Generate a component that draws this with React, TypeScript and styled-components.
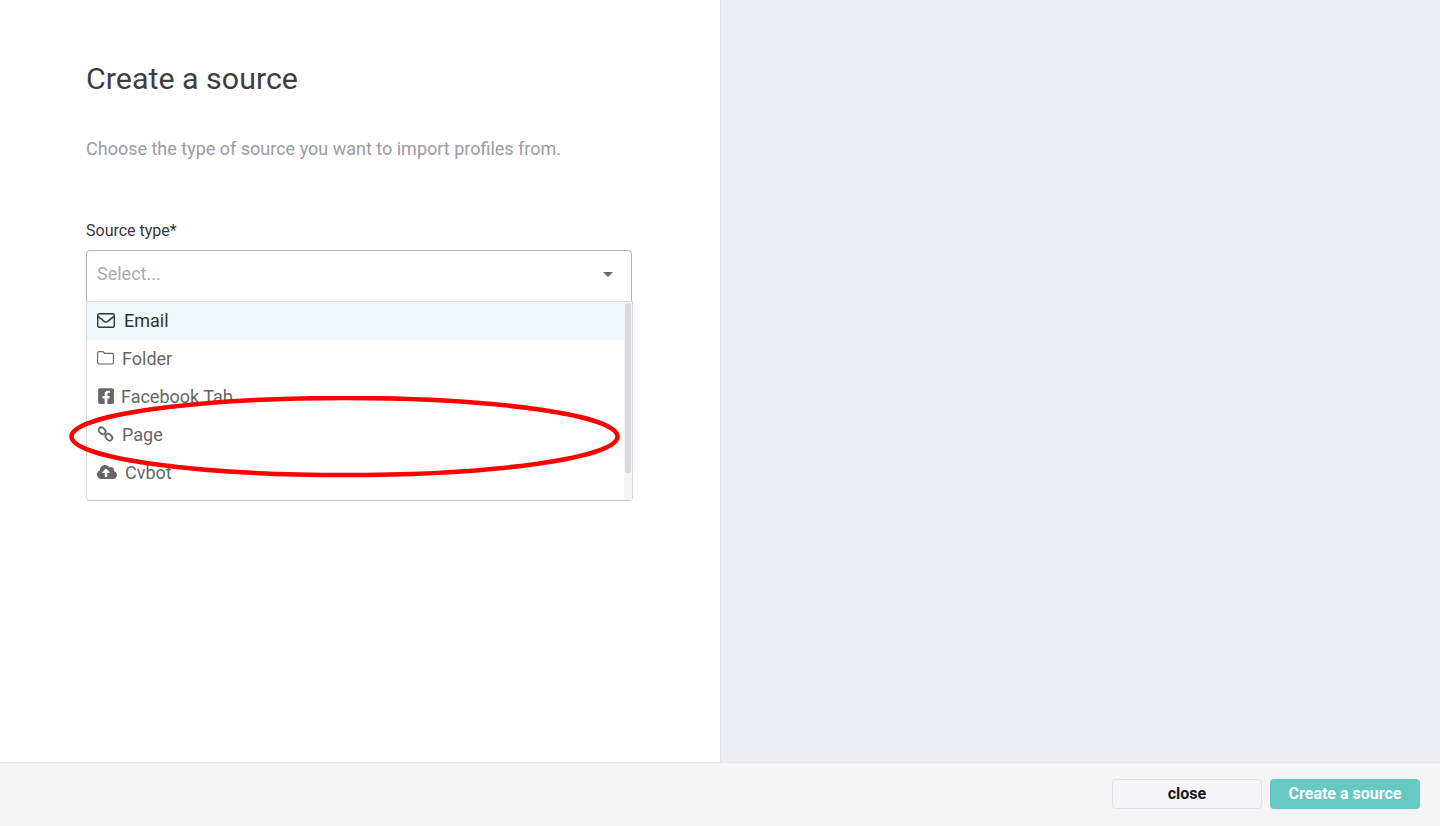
import React from 'react';
import { FaCloudUploadAlt, FaFacebookSquare } from 'react-icons/fa';
import styled, { createGlobalStyle } from 'styled-components';

const GlobalStyle = createGlobalStyle`
  html, body {
    margin: 0;
    padding: 0;
    background: #fff;
    font-family: Roboto, "Liberation Sans", sans-serif;
  }
`;

const MailIcon = () => (
  <svg viewBox="0 0 18 15" fill="none" stroke="currentColor" strokeWidth="1.4" strokeLinejoin="round" style={{ height: 15 }}>
    <rect x="0.7" y="0.7" width="16.6" height="13.6" rx="1.6" />
    <path d="M1 3.4l6.6 5.2c.9.6 1.9.6 2.8 0L17 3.4" />
  </svg>
);

const FolderIcon = () => (
  <svg viewBox="0 0 17 14" fill="none" stroke="currentColor" strokeWidth="1.1" strokeLinejoin="round" style={{ height: 14 }}>
    <path d="M2 .6h3.4c.7 0 1.1.3 1.4.8l.6 1h7.6c.8 0 1.4.6 1.4 1.4v7.8c0 .8-.6 1.4-1.4 1.4H2c-.8 0-1.4-.6-1.4-1.4V2C.6 1.2 1.2.6 2 .6z" />
  </svg>
);

const ChainIcon = () => (
  <svg viewBox="0 0 16 16" fill="none" stroke="currentColor" strokeWidth="1.8" style={{ height: 16 }}>
    <rect x="0.9" y="2.1" width="7.4" height="5.4" rx="2.7" transform="rotate(42 4.6 4.8)" />
    <rect x="7.7" y="8.5" width="7.4" height="5.4" rx="2.7" transform="rotate(42 11.4 11.2)" />
  </svg>
);

const options = [
  { label: 'Email', icon: <MailIcon />, gap: 9, size: 18, active: true },
  { label: 'Folder', icon: <FolderIcon />, gap: 8, size: 17, active: false },
  { label: 'Facebook Tab', icon: <FaFacebookSquare />, gap: 6, size: 18, active: false },
  { label: 'Page', icon: <ChainIcon />, gap: 8, size: 17, active: false },
  { label: 'Cvbot', icon: <FaCloudUploadAlt />, gap: 8, size: 20, active: false },
];

const App: React.FC = () => {
  return (
    <Page>
      <GlobalStyle />
      <Main>
        <FormPane>
          <Title>Create a source</Title>
          <Intro>Choose the type of source you want to import profiles from.</Intro>
          <Label>Source type*</Label>
          <SelectWrap>
            <SelectControl>
              <Placeholder>Select...</Placeholder>
              <Caret />
            </SelectControl>
            <Menu>
              <MenuList>
                {options.map((o) => (
                  <Option key={o.label} $active={o.active} $gap={o.gap} $size={o.size}>
                    {o.icon}
                    <span>{o.label}</span>
                  </Option>
                ))}
              </MenuList>
              <Track>
                <Thumb />
              </Track>
            </Menu>
            <Annotation viewBox="0 0 552 84" aria-hidden="true">
              <ellipse cx="275.5" cy="40.5" rx="273" ry="38.5" fill="none" stroke="#f00" strokeWidth="4.5" />
            </Annotation>
          </SelectWrap>
        </FormPane>
        <PreviewPane />
      </Main>
      <Footer>
        <CloseButton>close</CloseButton>
        <SubmitButton>Create a source</SubmitButton>
      </Footer>
    </Page>
  );
};

const Page = styled.div`
  width: 1440px;
  height: 826px;
  display: flex;
  flex-direction: column;
  overflow: hidden;
`;

const Main = styled.div`
  flex: 1;
  display: flex;
  min-height: 0;
`;

const FormPane = styled.section`
  width: 720px;
  box-sizing: border-box;
  padding: 61px 88px 0 86px;
  background: #fff;
`;

const PreviewPane = styled.section`
  flex: 1;
  background: #ebeef3;
  border-left: 1px solid #dde2ec;
`;

const Title = styled.h1`
  margin: 0;
  font-size: 30.4px;
  line-height: 36px;
  font-weight: 400;
  color: #3d3d42;
`;

const Intro = styled.p`
  margin: 40px 0 0;
  font-size: 18px;
  line-height: 24px;
  color: #9b9ba3;
`;

const Label = styled.label`
  display: block;
  margin-top: 60px;
  font-size: 16px;
  line-height: 20px;
  color: #36363b;
`;

const SelectWrap = styled.div`
  position: relative;
  margin-top: 9px;
  width: 546px;
`;

const SelectControl = styled.div`
  height: 52px;
  box-sizing: border-box;
  display: flex;
  align-items: center;
  justify-content: space-between;
  padding: 0 18px 5px 10px;
  border: 1px solid #b3b3b3;
  border-radius: 4px 4px 0 0;
  background: #fff;
`;

const Placeholder = styled.span`
  font-size: 18px;
  color: #aaa;
`;

const Caret = styled.span`
  width: 0;
  height: 0;
  margin-top: 2px;
  border-left: 5px solid transparent;
  border-right: 5px solid transparent;
  border-top: 5px solid #666;
`;

const Menu = styled.div`
  position: absolute;
  top: 51px;
  left: 0;
  width: 547px;
  height: 200px;
  box-sizing: border-box;
  display: flex;
  border: 1px solid #d9d9d9;
  border-bottom-color: #c4c4c4;
  border-radius: 0 0 4px 4px;
  background: #fff;
`;

const MenuList = styled.div`
  flex: 1;
  min-width: 0;
`;

const Option = styled.div<{ $active: boolean; $gap: number; $size: number }>`
  height: 38px;
  box-sizing: border-box;
  display: flex;
  align-items: center;
  gap: ${(p) => p.$gap}px;
  padding: 0 0 2px 10px;
  font-size: 18px;
  background: ${(p) => (p.$active ? '#f1f8fb' : 'transparent')};
  color: ${(p) => (p.$active ? '#333' : '#666')};

  svg {
    width: ${(p) => p.$size}px;
    height: ${(p) => p.$size}px;
    flex: none;
  }
`;

const Track = styled.div`
  width: 8px;
  flex: none;
  padding: 1px 1px 0;
  box-sizing: border-box;
  background: #f5f5f5;
`;

const Thumb = styled.div`
  height: 170px;
  border-radius: 3px;
  background: #d8d8dd;
`;

const Annotation = styled.svg`
  position: absolute;
  top: 146px;
  left: -17px;
  width: 552px;
  height: 84px;
  pointer-events: none;
`;

const Footer = styled.footer`
  height: 64px;
  flex: none;
  box-sizing: border-box;
  display: flex;
  align-items: center;
  justify-content: flex-end;
  gap: 8px;
  padding: 0 20px 2px 0;
  border-top: 1px solid #e3e5ea;
  background: #f5f5f6;
`;

const FooterButton = styled.button`
  width: 150px;
  height: 30px;
  box-sizing: border-box;
  border-radius: 4px;
  font-family: inherit;
  font-size: 16px;
  font-weight: 700;
  cursor: pointer;
`;

const CloseButton = styled(FooterButton)`
  border: 1px solid #dfe3ee;
  background: #f5f5f8;
  color: #16161c;
`;

const SubmitButton = styled(FooterButton)`
  border: none;
  background: #65c8c3;
  color: #fff;
`;

export default App;
